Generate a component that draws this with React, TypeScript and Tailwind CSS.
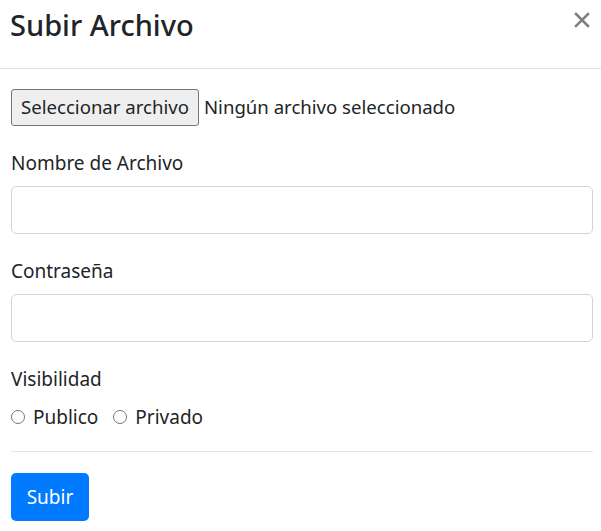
export default function App() {
  return (
    <div className="w-[601px] h-[531px] bg-white overflow-hidden text-[#212529] font-['Noto_Sans','Open_Sans',sans-serif]">
      <div className="flex items-start justify-between border-b border-[#dee2e6] h-[69px] pl-[10px] pr-[11px]">
        <h5 className="text-[29px] font-medium leading-none mt-[10px]">Subir Archivo</h5>
        <button className="text-[#808080] mt-[12px]" aria-label="Cerrar">
          <svg width="16" height="16" viewBox="0 0 16 16">
            <path d="M2 2 L14 14 M14 2 L2 14" stroke="currentColor" strokeWidth="2.6" strokeLinecap="square" />
          </svg>
        </button>
      </div>
      <div className="pl-[11px] pr-[8px] pt-[20px]">
        <div className="flex items-center gap-[5px] leading-none">
          <span className="h-[37px] px-[9px] flex items-center bg-[#efefef] border border-[#767676] rounded-[3px] text-[18.6px]">
            Seleccionar archivo
          </span>
          <span className="text-[18.6px]">Ningún archivo seleccionado</span>
        </div>
        <label className="block text-[19px] mt-[22px] leading-[30px]">Nombre de Archivo</label>
        <div className="mt-[8px] h-[48px] rounded-[5px] border border-[#ced4da]" />
        <label className="block text-[19px] mt-[22px] leading-[30px]">Contraseña</label>
        <div className="mt-[8px] h-[48px] rounded-[5px] border border-[#ced4da]" />
        <div className="text-[19px] mt-[22px] leading-[30px]">Visibilidad</div>
        <div className="flex items-center mt-[8px] text-[19px] leading-[30px]">
          <span className="w-[14px] h-[14px] rounded-full border border-[#767676]" />
          <span className="ml-[8px]">Publico</span>
          <span className="w-[14px] h-[14px] rounded-full border border-[#767676] ml-[15px]" />
          <span className="ml-[8px]">Privado</span>
        </div>
        <div className="mt-[19px] border-t border-[#e5e5e5]" />
        <button className="mt-[21px] w-[78px] h-[48px] rounded-[5px] bg-[#007bff] text-white text-[19px]">
          Subir
        </button>
      </div>
    </div>
  )
}
